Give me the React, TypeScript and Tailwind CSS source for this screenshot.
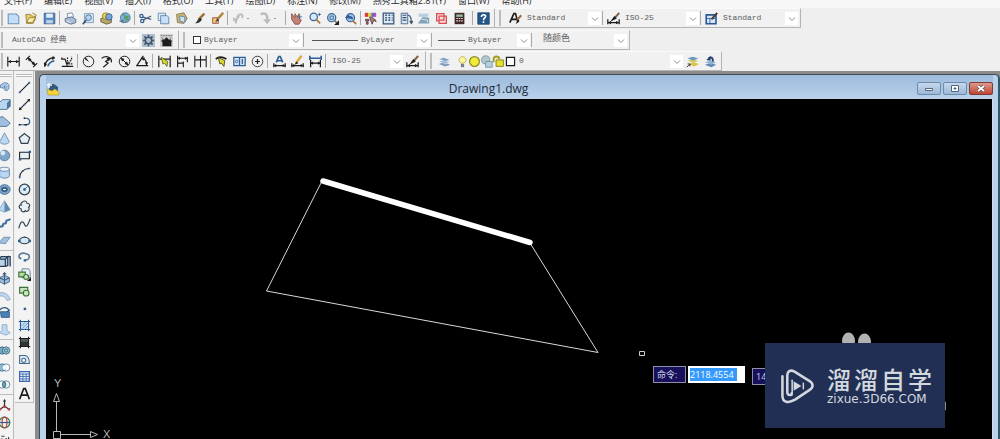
import React from "react";

const menus = [
  "文件(F)", "编辑(E)", "视图(V)", "插入(I)", "格式(O)", "工具(T)",
  "绘图(D)", "标注(N)", "修改(M)", "燕秀工具箱2.81(Y)", "窗口(W)", "帮助(H)",
];

const K = "#1c1c1c";
const B = "#2f5f96";
const L = "#b9d7f0";

const icons: Record<string, React.ReactNode> = {
  new: <path d="M1.500 2.500h10l3 3v9h-13z" fill="#c3def6" stroke="#6c93bb" strokeWidth="1.300" />,
  open: (
    <>
      <path d="M1 3h6l1 2h5v3l-3 6H2z" fill="#e8cf6c" stroke="#8f7a33" />
      <path d="M5 7h8l-4 6H2zM9 1l5 3-3 2" fill="#f7ecab" stroke="#8f7a33" />
    </>
  ),
  save: (
    <>
      <path d="M1.5 1.5h13v13h-13z" fill="#5c8cc7" stroke="#2e558c" />
      <path d="M4 2h8v5H4z" fill="#e3effa" />
      <path d="M4 10h8v4H4z" fill="#c3d4e6" />
    </>
  ),
  plot: (
    <>
      <path d="M4 2l6-1 2 5-7 2z" fill="#f5f8fc" stroke="#6b7f99" />
      <path d="M1.500 8l8-2 5 3v4l-6 2-7-3z" fill="#aabed6" stroke="#4c617d" />
      <path d="M3 11l5 2" stroke="#fff" />
    </>
  ),
  preview: (
    <>
      <path d="M3 2h11v11H3z" fill="#d9e8f5" stroke="#7491b0" />
      <circle cx="8" cy="7" r="3.500" fill="#b4d6f2" stroke="#3a618c" />
      <path d="M5 10l-4 5" stroke="#37526e" strokeWidth="2" />
    </>
  ),
  publish: (
    <>
      <path d="M1 8l8-2 5 3v4l-6 2-7-3z" fill="#b9a765" stroke="#5b5638" />
      <circle cx="7" cy="5" r="4" fill="#f0d24c" stroke="#8c7420" />
      <circle cx="11" cy="6" r="4" fill="#7aa6d6" stroke="#2e558c" />
    </>
  ),
  globe: (
    <>
      <circle cx="9" cy="7" r="6" fill="#7db4df" stroke="#416f9c" />
      <path d="M5 4c3-3 4 0 3 3s4 1 5-2M9 12c0-3 4-4 5-3" fill="#5da35c" stroke="#4d9450" />
      <path d="M1 11l6-2v5z" fill="#5c7693" />
    </>
  ),
  cut: (
    <>
      <path d="M15 5L5 10M15 9L4 6" stroke="#45607d" strokeWidth="1.500" />
      <circle cx="3" cy="5" r="2" fill="none" stroke="#315a91" strokeWidth="1.500" />
      <circle cx="4" cy="11" r="2" fill="none" stroke="#315a91" strokeWidth="1.500" />
    </>
  ),
  copy: (
    <>
      <path d="M1.500 1.500h9v9h-9z" fill="#e2effa" stroke="#587fa8" />
      <path d="M4.500 4.500h8l2 2v8h-10z" fill="#c7e0f5" stroke="#4d79a8" />
    </>
  ),
  paste: (
    <>
      <path d="M2 3l9-2 4 7-4 6-8-1z" fill="#c8b376" stroke="#7d6e40" />
      <path d="M6 5l6 1v7l-6-2z" fill="#cfe5f6" stroke="#557fa8" />
    </>
  ),
  match: (
    <>
      <path d="M14 2L7 9" stroke="#9e7233" strokeWidth="3" />
      <path d="M9 7l2 2c-2 5-6 5-9 5 3-1 3-5 7-7z" fill="#333" />
    </>
  ),
  block: (
    <>
      <path d="M2 7h7v7H2z" fill="#efc76c" stroke="#9b4544" />
      <path d="M15 1L7 10" stroke="#b0843c" strokeWidth="3" />
      <path d="M8 8l2 2-5 3z" fill="#493b62" />
    </>
  ),
  undo: (
    <>
      <path d="M6 6c5-6 9-2 6 1M5 14c-1-4 0-6 4-9" fill="none" stroke="#bcbcbc" strokeWidth="2.500" />
      <path d="M1 6l6 4-5 2z" fill="#bcbcbc" />
    </>
  ),
  redo: (
    <>
      <path d="M2 3c6-3 9 0 8 8" fill="none" stroke="#bcbcbc" strokeWidth="3" />
      <path d="M5 9h10l-5 6z" fill="#bcbcbc" />
    </>
  ),
  pan: (
    <>
      <path d="M2 2l4 5V2l3 4 2-4 1 7 2 1-3 5H6L2 9z" fill="#c38375" stroke="#84483f" />
      <path d="M12 3v6M9 6h6" stroke="#416b9c" />
    </>
  ),
  zoom: (
    <>
      <circle cx="7" cy="6" r="4.500" fill="#d5eafb" stroke="#3c6696" strokeWidth="1.500" />
      <path d="M10 9l5 5" stroke="#a8743a" strokeWidth="2" />
      <path d="M12 3h4M14 1v4" stroke={B} />
    </>
  ),
  zoomwin: (
    <>
      <circle cx="7" cy="7" r="5" fill="#b7d4ed" stroke="#3c6696" strokeWidth="1.500" />
      <path d="M5 5h4v4H5z" fill="none" stroke={B} />
      <path d="M11 11l2 2" stroke="#8a6a44" strokeWidth="2" />
      <path d="M16 10v6h-6z" fill={K} />
    </>
  ),
  zoomprev: (
    <>
      <circle cx="8" cy="7" r="5" fill="#9fc6e8" stroke="#3c6696" strokeWidth="1.500" />
      <path d="M1 7l5-5v3c4 0 5 1 5 4" fill="#315f96" />
      <path d="M11 11l4 4" stroke="#a8743a" strokeWidth="2" />
    </>
  ),
  props: (
    <>
      <path d="M1 1h4v5H1z" fill="#da3e39" />
      <path d="M5 1h4v5H5z" fill="#e8cc36" />
      <path d="M9 1h4v5H9z" fill="#4b70cd" />
      <path d="M12 1h3v5h-3z" fill="#b84ac4" />
      <path d="M2 9h4v2H2zM3 12h2v3H3zM7 6c5 1 7 3 8 6l-3-2-2 5-2-5z" fill="#bd786d" stroke="#4b3a43" />
    </>
  ),
  grid: (
    <>
      <path d="M1.500 1.500h13v13h-13z" fill="#dbe8f4" stroke="#375478" strokeWidth="1.500" />
      <path d="M4 4h2M8 4h2M12 4h1M4 7h2M8 7h2M12 7h1M4 10h2M8 10h2M12 10h1" stroke="#375478" strokeWidth="2" />
    </>
  ),
  palettes: (
    <>
      <path d="M1.500 1.500h8v13h-8z" fill="#dbe8f4" stroke="#375478" />
      <path d="M3 4h5M3 7h5M3 10h5" stroke="#375478" strokeWidth="1.500" />
      <path d="M10 4c4 0 4 5 4 9M12 11l2 3 2-3" fill="none" stroke="#375478" strokeWidth="1.500" />
    </>
  ),
  sheets: (
    <>
      <path d="M2 2h12v4H2z" fill="#b9cedf" />
      <path d="M1 14l6-8 8 1v7z" fill="#7fa2b9" />
      <path d="M6 9l7 1v3" fill="none" stroke="#e8f3fa" />
    </>
  ),
  markup: (
    <>
      <path d="M2 2h9v3h3v9H5v-3H2z" fill="#f6dada" stroke="#d54e52" strokeWidth="1.500" />
      <path d="M5 5h6v5H5z" fill="none" stroke="#d54e52" strokeWidth="1.500" />
    </>
  ),
  calc: (
    <>
      <path d="M2 1h12v14H2z" fill="#432626" />
      <path d="M4 3h8v3H4z" fill="#8fc0a0" />
      <path d="M4 8h2M7 8h2M10 8h2M4 11h2M7 11h2M10 11h2" stroke="#ddd" strokeWidth="1.500" />
    </>
  ),
  help: (
    <>
      <path d="M1 1h14v14H1z" fill="#24588c" stroke="#163e68" />
      <path d="M5.500 6c0-4 6-3 5 0-1 1.500-2.500 1.500-2.500 4M8 11.500v2" fill="none" stroke="#fff" strokeWidth="2" />
    </>
  ),
  textstyle: (
    <>
      <path d="M1 13L6 2h2l3 11M3 9h7" fill="none" stroke={K} strokeWidth="2" />
      <path d="M15 4l-5 6" stroke="#a06a3c" strokeWidth="2.500" />
      <path d="M11 9l2 2-5 4z" fill={K} />
    </>
  ),
  dimstyle: (
    <>
      <path d="M1 9v6M15 9v6M1 13h14" stroke={K} strokeWidth="1.500" />
      <path d="M1 13l4-2v4zM15 13l-4-2v4z" fill={K} />
      <path d="M15 1L9 8" stroke="#7d6248" strokeWidth="2.500" />
      <path d="M9 5l3 3-8 4z" fill={K} />
    </>
  ),
  tablestyle: (
    <>
      <path d="M1.500 3.500h12v11h-12z" fill="#d6e6f8" stroke="#2c5795" strokeWidth="2" />
      <path d="M2 8h11M6 8v6" stroke="#2c5795" />
      <path d="M15 1L8 9" stroke="#4a3e37" strokeWidth="2.500" />
    </>
  ),
  gear: (
    <>
      <path d="M0 0h16v16H0z" fill="#aebfd0" />
      <circle cx="8" cy="8" r="4" fill="none" stroke="#43566c" strokeWidth="2" />
      <path d="M8 1v3M8 12v3M1 8h3M12 8h3M3 3l2 2M11 11l2 2M13 3l-2 2M5 11l-2 2" stroke="#43566c" strokeWidth="2" />
    </>
  ),
  home: (
    <>
      <path d="M0 0h16v16H0z" fill="#cfcfcf" />
      <path d="M3 6l2 1 3-3 3 3 2-1v2h2l-1 2v5H3v-5L1 8h2z" fill={K} />
      <path d="M1 2h14M2 5h2M12 5h3" stroke="#666" strokeDasharray="2 1" />
    </>
  ),
  dlinear: (
    <>
      <path d="M1 2v12M15 2v12M2 8h12" stroke={K} strokeWidth="1.400" />
      <path d="M1 8l4-2v4zM15 8l-4-2v4z" fill={K} />
    </>
  ),
  daligned: (
    <>
      <path d="M1 6l5-5M10 15l5-5M4 4l8 8" stroke={K} strokeWidth="1.400" />
      <path d="M3 3l5 2-3 3zM13 13l-5-2 3-3z" fill={K} />
    </>
  ),
  darc: (
    <>
      <path d="M2 14C3 7 7 4 14 3" fill="none" stroke={K} strokeWidth="1.500" />
      <path d="M6 14c1-4 3-6 8-7" fill="none" stroke={B} strokeWidth="2" />
      <path d="M1 9l4 2-3 4zM12 1l3 3-4 2z" fill={K} />
    </>
  ),
  dordinate: (
    <>
      <path d="M1 3v2h4M1 14h14M5 5l3 9" fill="none" stroke={K} strokeWidth="1.500" />
      <path d="M8 3v8h6M9 10l4-4V2" fill="none" stroke={K} strokeDasharray="2 1" strokeWidth="1.500" />
    </>
  ),
  dradius: (
    <>
      <circle cx="8" cy="8" r="6.500" fill="none" stroke={K} strokeWidth="1.200" />
      <path d="M8 8L4 4" stroke={K} strokeWidth="1.200" />
      <path d="M3 3l4 2-2 2z" fill={K} />
    </>
  ),
  djog: (
    <>
      <path d="M2 4c6-4 13-1 12 5" fill="none" stroke={K} strokeWidth="1.500" />
      <path d="M12 4L7 8l3 2-6 5" fill="none" stroke={K} strokeWidth="1.500" />
      <path d="M13 3l-2 5-3-4z" fill={K} />
    </>
  ),
  ddiameter: (
    <>
      <circle cx="8" cy="8" r="6.500" fill="none" stroke={K} strokeWidth="1.200" />
      <path d="M4 4l8 8" stroke={K} strokeWidth="1.200" />
      <path d="M3 3l5 2-3 3zM13 13l-5-2 3-3z" fill={K} />
    </>
  ),
  dangle: (
    <>
      <path d="M9 1L1 13h14M8 4c4 1 5 4 5 8" fill="none" stroke={K} strokeWidth="1.500" />
      <path d="M6 3l5 0-2 4zM13 13l-2-4h4z" fill={K} />
    </>
  ),
  dquick: (
    <>
      <path d="M1 1v14M15 1v14M2 5h13" stroke={K} strokeWidth="1.500" />
      <path d="M4 3l8 5-1 6-3-4-2 1z" fill="#d9dc2e" stroke="#5d5d1a" />
    </>
  ),
  dbase: (
    <>
      <path d="M2 1v14M2 4h12M2 10h7M9 8v7M14 2v7" stroke={K} strokeWidth="1.400" />
      <path d="M2 4l3-2v4zM14 4l-3-2v4z" fill={K} />
    </>
  ),
  dcont: <path d="M1 1v14M8 1v14M15 1v14M1 6h14" stroke={K} strokeWidth="1.300" />,
  leader: (
    <>
      <path d="M1 5c4-4 8-3 13 0" fill="none" stroke={K} strokeWidth="2" />
      <path d="M4 3l8 4-1 7-3-4-2 1z" fill="#d9dc2e" stroke="#3b3b1a" />
    </>
  ),
  tol: (
    <>
      <path d="M1 3h14v10H1z" fill="#cfe3f6" stroke={B} strokeWidth="1.500" />
      <path d="M8 3v10M11.500 5v6" stroke={B} strokeWidth="1.500" />
      <circle cx="4.500" cy="8" r="1.500" fill="none" stroke={B} />
    </>
  ),
  center: (
    <>
      <circle cx="8" cy="8" r="6.500" fill="none" stroke={K} />
      <path d="M8 5v6M5 8h6" stroke={K} strokeWidth="1.500" />
    </>
  ),
  dimtext: (
    <>
      <path d="M4 9l3-7h2l3 7M5 7h6" fill="none" stroke={B} strokeWidth="2" />
      <path d="M1 10v5M15 10v5M1 13h14" stroke={K} strokeWidth="1.500" />
      <path d="M1 13l3-2v4zM15 13l-3-2v4z" fill={K} />
    </>
  ),
  dimedit: (
    <>
      <path d="M1 10v5M15 10v5M1 13h14" stroke={K} strokeWidth="1.500" />
      <path d="M1 13l3-2v4zM15 13l-3-2v4z" fill={K} />
      <path d="M13 1L6 10" stroke="#e0a63a" strokeWidth="3" />
      <path d="M7 8l2 2-5 2z" fill={K} />
    </>
  ),
  dimupd: (
    <>
      <path d="M2 6v9M14 6v9M2 10h12" stroke={K} strokeWidth="1.500" />
      <path d="M2 10l3-2v4zM14 10l-3-2v4z" fill={K} />
      <path d="M1 1v5M15 1v5M1 4h14" stroke={B} strokeWidth="2" />
    </>
  ),
  layers: (
    <>
      <path d="M1 11l6-2 8 3-6 2z" fill="#7c99b6" />
      <path d="M1 8l6-2 8 3-6 2z" fill="#9cb9d6" stroke="#fff" strokeWidth=".5" />
      <path d="M1 5l6-2 8 3-6 2z" fill="#7fa0c2" stroke="#fff" strokeWidth=".5" />
    </>
  ),
  bulb: (
    <>
      <path d="M6 10C1 6 5 2 8 2s7 4 2 8z" fill="#fbf6a0" stroke="#b5a53c" />
      <path d="M6 11h4v4H6z" fill="#7b8190" />
    </>
  ),
  sun: <circle cx="8" cy="8" r="6" fill="#f2ec38" stroke="#8a8a28" strokeWidth="1.500" />,
  freeze: (
    <>
      <circle cx="7" cy="6" r="5" fill="#b4c8ce" stroke="#73919e" />
      <path d="M7 8h8v7H7z" fill="#b6d1df" stroke="#6e8d9f" />
    </>
  ),
  lock: (
    <>
      <path d="M2 9V5c1-5 7-3 7 0" fill="none" stroke="#a5a02a" strokeWidth="2.500" />
      <path d="M5 6h9v8H5z" fill="#e8df2b" stroke="#77721d" />
    </>
  ),
  swatch: <path d="M3 3h10v10H3z" fill="#fff" stroke={K} strokeWidth="1.500" />,
  layercur: (
    <>
      <path d="M4 11l5-2 7 2-6 3z" fill="#d8c63a" />
      <path d="M2 7l6-2 7 2-6 3z" fill="#d6cf62" />
      <path d="M2 4l6-2 7 2-6 3z" fill="#6b99bf" />
      <path d="M1 15l4-4M5 11v3M5 11H2" stroke={K} />
    </>
  ),
  layerprev: (
    <>
      <path d="M1 12l7-2 7 2-6 3z" fill="#5f86b0" />
      <path d="M1 9l7-2 7 2-6 3z" fill="#8fb3d6" />
      <path d="M11 8c0-5-2-6-5-4" fill="none" stroke="#1f3f6e" strokeWidth="2.500" />
      <path d="M3 6l5-5v6z" fill="#1f3f6e" />
    </>
  ),
  line: (
    <>
      <path d="M2 14L14 2" stroke={K} strokeWidth="1.300" />
      <path d="M1 13h2v2H1zM13 1h2v2h-2z" fill={B} />
    </>
  ),
  xline: (
    <>
      <path d="M2 14L14 2" stroke={K} strokeWidth="1.300" />
      <path d="M1 15l1-4 3 3zM15 1l-4 1 3 3z" fill={K} />
      <path d="M7 7h2v2H7z" fill={B} />
    </>
  ),
  pline: (
    <>
      <path d="M1 12h10c5-1 4-7 0-8H8" fill="none" stroke={B} strokeWidth="1.500" />
      <path d="M1 11h2v2H1zM8 11h3v2H8zM7 3h2v2H7z" fill={K} />
    </>
  ),
  polygon: <path d="M8 2l6.500 5-2.500 7H4L1.500 7z" fill="#e2eef3" stroke="#33424c" strokeWidth="1.500" />,
  rect: (
    <>
      <path d="M2 4h12v8H2z" fill="#e5eff7" stroke={K} strokeWidth="1.300" />
      <path d="M1 11h3v3H1zM13 2h3v3h-3z" fill={B} />
    </>
  ),
  arc: (
    <>
      <path d="M2 14C2 8 7 3 14 3" fill="none" stroke={K} strokeWidth="1.300" />
      <path d="M1 13h2v2H1zM5 5h2v2H5zM13 2h2v2h-2z" fill={B} />
    </>
  ),
  circle: (
    <>
      <circle cx="8" cy="8" r="6.500" fill="#dcecf5" stroke="#33424c" strokeWidth="1.500" />
      <path d="M8 8l4-4M7 7h2v2H7z" stroke={B} fill={B} />
    </>
  ),
  cloud: <path d="M5 3c2-3 6-2 6 1 4 0 4 4 2 5 2 4-2 6-4 4-2 3-6 1-5-2-4-1-3-5 0-5-1-1 0-3 1-3z" fill="#eaf1f6" stroke="#33424c" strokeWidth="1.400" />,
  spline: <path d="M1 14C3 5 6 4 8 9s4 2 7-7" fill="none" stroke="#33424c" strokeWidth="1.400" />,
  ellipse: (
    <>
      <ellipse cx="8" cy="8" rx="6" ry="4" fill="#d5e7f4" stroke="#33424c" strokeWidth="1.500" />
      <path d="M0 7h3v3H0zM13 7h3v3h-3zM7 3h2v2H7z" fill={B} />
    </>
  ),
  earc: (
    <>
      <path d="M2 9C-1 3 6 2 9 3c7 1 6 8 0 8" fill="none" stroke="#5c7c99" strokeWidth="2" />
      <path d="M7 10h3v3H7zM2 8h2v2H2z" fill={B} />
    </>
  ),
  insert: (
    <>
      <path d="M5 1h8l2 3v8H5z" fill="#e4eef5" stroke="#55718b" />
      <path d="M1 5h8v6H1z" fill="#b9dca7" stroke="#3b7138" strokeWidth="1.400" />
      <circle cx="10" cy="11" r="3" fill="#cbe8bb" stroke="#3b7138" strokeWidth="1.400" />
      <path d="M16 11v5h-5z" fill={K} />
    </>
  ),
  makeblock: (
    <>
      <path d="M2 3h10v7H2z" fill="#c8e2bd" stroke="#3b7138" strokeWidth="1.400" />
      <circle cx="10" cy="10" r="3.500" fill="#cbe8bb" stroke="#3b7138" strokeWidth="1.400" />
    </>
  ),
  point: <path d="M7 7h3v3H7z" fill={B} />,
  hatch: (
    <>
      <path d="M3 3h10v10H3z" fill="#c8dcf0" />
      <path d="M3 1v14M13 1v14M1 3h14M1 13h14" stroke="#28578d" strokeWidth="1.300" />
      <path d="M4 9l5-5M4 13l9-9M8 13l5-5" stroke="#5a8fc9" />
    </>
  ),
  gradient: (
    <>
      <path d="M3 3h10v10H3z" fill="#53605f" />
      <path d="M3 7h10v6H3z" fill="#2d3535" />
      <path d="M3 1v14M13 1v14M1 3h14M1 13h14" stroke={K} strokeWidth="1.300" />
    </>
  ),
  region: (
    <>
      <path d="M2 3h7c4 1 5 5 5 10H2z" fill="#dcebf7" stroke="#466789" strokeWidth="1.300" />
      <circle cx="7" cy="9" r="2.500" fill="#fff" stroke="#466789" strokeWidth="1.300" />
    </>
  ),
  table: (
    <>
      <path d="M2 2h12v12H2z" fill="#e4edfb" stroke="#3c68b1" strokeWidth="1.500" />
      <path d="M2 5h12M2 8h12M2 11h12M6 4v10M10 4v10" stroke="#3c68b1" />
    </>
  ),
  mtext: <path d="M2 15L7 2h2l5 13M4 10h8" fill="none" stroke={K} strokeWidth="2" />,
  polysolid: <path d="M3 5l5-3c8 0 6 8 3 10l-3-1c3-3 2-6 0-5v3L3 8z" fill="#a9cced" stroke="#55799e" />,
  box: (
    <>
      <path d="M1 6l5-4h9v8l-4 4H1z" fill={L} stroke="#3e658c" />
      <path d="M11 14V6l4-4v8z" fill="#4f779f" />
    </>
  ),
  wedge: <path d="M1 3l5-1 9 8-4 4H1z" fill="#9fbfdd" stroke="#3e658c" />,
  cone: <path d="M8 1l6 11c-2 4-10 4-12 0z" fill={L} stroke="#6a87a6" />,
  sphere: (
    <>
      <circle cx="8" cy="8" r="6.500" fill="#7fa5c9" stroke="#55799e" />
      <circle cx="6" cy="5" r="3" fill="#d6e8f7" />
    </>
  ),
  cylinder: (
    <>
      <path d="M2 4v8c1 4 11 4 12 0V4z" fill={L} stroke="#55799e" />
      <ellipse cx="8" cy="4" rx="6" ry="2.500" fill="#e8f2fa" stroke="#55799e" />
    </>
  ),
  torus: (
    <>
      <ellipse cx="8" cy="8" rx="7" ry="6" fill="#7ba2c8" stroke="#416b93" />
      <ellipse cx="8" cy="8" rx="3" ry="2" fill="#fff" stroke="#315a82" strokeWidth="2" />
    </>
  ),
  pyramid: (
    <>
      <path d="M8 1l7 11-7 3-7-3z" fill={L} stroke="#7f9fbd" />
      <path d="M8 1l7 11-7 3z" fill="#5f87ae" />
    </>
  ),
  helix: <path d="M1 14c1-5 5 0 5-4s4 0 4-4 3 0 5-4" fill="none" stroke="#426e9e" strokeWidth="2.500" />,
  planar: <path d="M1 11l6-7h8l-6 8z" fill="#9fc0e1" stroke="#6488ad" />,
  extrude: <path d="M1 5h8v9H1zM9 5l3-3v11l-3 1M1 5l3-3h11v12" fill="#bcd3e6" stroke="#263c53" strokeWidth="1.500" />,
  presspull: (
    <>
      <path d="M2 7l6-3 6 3v5l-6 3-6-3z" fill="#9ebfdd" stroke="#3a5876" />
      <path d="M8 1v8M2 7l6 3 6-3M8 10v5M6 3l2-2 2 2" fill="none" stroke="#3a5876" strokeWidth="1.300" />
    </>
  ),
  sweep: <path d="M1 5c8-2 12 2 14 8l-4 1C9 9 6 8 1 9z" fill={L} stroke="#90a5bb" />,
  revolve: (
    <>
      <path d="M3 7h11v7H4z" fill="#4c81b8" stroke="#2c5783" />
      <path d="M2 5c4-5 9-3 12 0l-3 2" fill="none" stroke="#2c5783" strokeWidth="1.500" />
    </>
  ),
  loft: <path d="M5 2h6v7l4 3-5 3-8-3 3-3z" fill="#bcd9f1" stroke="#8aa8c5" />,
  union: (
    <>
      <circle cx="5" cy="8" r="4.500" fill="#72a8bd" stroke="#2f6079" />
      <circle cx="10" cy="8" r="4.500" fill="#9ac5d5" stroke="#2f6079" />
      <circle cx="10" cy="8" r="2" fill="none" stroke="#2f6079" />
    </>
  ),
  subtract: (
    <>
      <circle cx="10" cy="8" r="4.500" fill="#fff" stroke="#55799e" />
      <circle cx="5" cy="8" r="4.500" fill="#8fb7d3" stroke="#3a6281" />
      <ellipse cx="8" cy="8" rx="2" ry="3" fill="#fff" />
    </>
  ),
  intersect: (
    <>
      <circle cx="5" cy="8" r="4.500" fill="#fff" stroke="#4b7895" />
      <circle cx="10" cy="8" r="4.500" fill="none" stroke="#4b7895" />
      <ellipse cx="7.500" cy="8" rx="2" ry="3" fill="#6fa7c8" stroke="#2f6079" />
    </>
  ),
  move3d: (
    <>
      <path d="M8 9V2M8 9l-6 4M8 9l6 4" stroke="#2f2f2f" strokeWidth="1.500" />
      <path d="M6 3l2-3 2 3z" fill="#2f2f2f" />
      <path d="M6 8h4v3H6zM1 11h3v3H1zM12 11h3v3h-3z" fill="#b64848" />
    </>
  ),
  rotate3d: (
    <>
      <circle cx="8" cy="8" r="6.500" fill="none" stroke="#3b8549" strokeWidth="1.500" />
      <ellipse cx="8" cy="8" rx="3" ry="6.500" fill="none" stroke="#b64848" strokeWidth="1.500" />
      <path d="M1 8h14" stroke="#38568c" strokeWidth="1.500" />
    </>
  ),
  align3d: <path d="M1 13c1-7 6-7 7-1M10 6v8M13 5v9M4 4h4" fill="none" stroke="#454545" strokeWidth="1.500" />,
};

function Glyph({ name }: { name: string }) {
  return (
    <svg viewBox="0 0 16 16" className="h-[13px] w-[13px] shrink-0" aria-hidden="true">
      {icons[name]}
    </svg>
  );
}

function Tool({ name }: { name: string }) {
  return (
    <button type="button" aria-label={name} className="flex h-[17px] w-[18px] items-center justify-center">
      <Glyph name={name} />
    </button>
  );
}

function Tools({ names }: { names: string[] }) {
  return (
    <div className="flex items-center">
      {names.map((n) => (
        <Tool key={n} name={n} />
      ))}
    </div>
  );
}

function Sep() {
  return <div className="mx-px h-[14px] w-px shrink-0 bg-[#a9a9a9]" />;
}

function Grip() {
  return <div className="mx-px h-[16px] w-[2px] shrink-0 border-x border-x-[#bcbcbc] bg-white" />;
}

function Chevron() {
  return (
    <svg viewBox="0 0 13 13" className="pointer-events-none h-[13px] w-[13px] shrink-0 bg-white" aria-hidden="true">
      <path d="M4 5.500l3 3 3-3" fill="none" stroke="#8c8c8c" />
    </svg>
  );
}

function Combo({ label, value, width, children, size = "text-[8px]" }: {
  label: string; value: string; width: string; children?: React.ReactNode; size?: string;
}) {
  return (
    <div className={`flex h-[15px] items-center bg-[#f1f1f1] ${width}`}>
      {children}
      <select
        aria-label={label}
        className={`min-w-0 flex-1 appearance-none bg-transparent pl-[3px] font-['Liberation_Mono','Noto_Sans_CJK_SC',monospace] text-[#5c5c5c] outline-none ${size}`}
      >
        <option>{value}</option>
      </select>
      <Chevron />
    </div>
  );
}

function Bar({ children }: { children: React.ReactNode }) {
  return (
    <div className="flex h-[20px] items-center border-r border-b border-t border-t-[#fafafa] border-r-[#b4b4b4] border-b-[#b4b4b4] bg-[#f1f1f1]">
      {children}
    </div>
  );
}

function Palette({ groups, width }: { groups: string[][]; width: string }) {
  return (
    <div className={`shrink-0 overflow-hidden border-r border-b border-[#bdbdbd] bg-[#f3f3f3] ${width}`}>
      <div className="mx-px mt-[3px] mb-[2px] h-[3px] border-y border-[#bcbcbc] bg-white" />
      {groups.map((g, i) => (
        <div key={i} className={i > 0 ? "mt-px border-t border-[#bdbdbd] pt-[2px]" : ""}>
          {g.map((n) => (
            <button key={n} type="button" aria-label={n} className="flex h-[17px] w-full items-center justify-center">
              <Glyph name={n} />
            </button>
          ))}
        </div>
      ))}
    </div>
  );
}

function WindowButton({ label, tone, children }: { label: string; tone: string; children: React.ReactNode }) {
  return (
    <button type="button" aria-label={label} className={`flex h-[13px] w-[24px] items-center justify-center rounded-[2px] border ${tone}`}>
      <svg viewBox="0 0 12 9" className="h-[9px] w-[12px]" aria-hidden="true">{children}</svg>
    </button>
  );
}

function Drawing() {
  return (
    <svg className="absolute inset-0 h-full w-full" aria-hidden="true">
      <path d="M276 82L220.500 192L552 253.500L484 144" fill="none" stroke="#d8d8d8" strokeWidth="1" />
      <path d="M277 82L484 143.500" stroke="#fff" strokeWidth="5.500" strokeLinecap="round" />
      <path d="M593.500 252.500h5v4h-5z" fill="none" stroke="#d0d0d0" />
      <g fill="none" stroke="#b8b8b8">
        <path d="M7.500 332.500h7v7h-7z" />
        <path d="M10.500 332V303M7.500 302.500L10.500 294.500L13.500 302.500z" />
        <path d="M15 335.500H44M44.500 332.500L51.500 335.500L44.500 338.500z" />
      </g>
      <g fill="#b8b8b8" fontFamily="'Liberation Sans', sans-serif" fontSize="11">
        <text x="8" y="288">Y</text>
        <text x="57" y="339">X</text>
      </g>
      <ellipse cx="802.500" cy="242" rx="6.500" ry="8.500" fill="#b2b2b2" />
      <ellipse cx="818.500" cy="243" rx="6.500" ry="8.500" fill="#b2b2b2" />
      <path d="M896 303h3.500v8H896" fill="none" stroke="#8c8c8c" />
    </svg>
  );
}

function Watermark() {
  return (
    <div className="absolute top-[244px] left-[719px] flex h-[85px] w-[180px] items-center gap-[12px] bg-[#212f54] pl-[15px] text-[#d3d8df]">
      <svg viewBox="0 0 36 36" className="h-[36px] w-[35px] shrink-0" aria-hidden="true">
        <g fill="none" stroke="currentColor" strokeWidth="2.600" strokeLinejoin="round" strokeLinecap="round">
          <path d="M12 25.500V27c-4 1-4.500-1-4.500-3V7c0-4 3-6 7-4l16 10c4 2.500 4 6.500 0 9l-15 10c-7 4-13 3-13-4V8" />
          <path d="M12.500 12v13" strokeWidth="1.600" />
        </g>
        <path d="M14 13l8 5-8 5z" fill="currentColor" />
        <path d="M24 14.500v7" stroke="currentColor" strokeWidth="1.500" />
      </svg>
      <div>
        <div className="flex gap-[3px] font-['Noto_Sans_CJK_SC',sans-serif] text-[24px] leading-[26px] font-medium">
          <span>溜</span><span>溜</span><span>自</span><span>学</span>
        </div>
        <div className="font-['DejaVu_Sans',sans-serif] text-[12px] leading-[14px]">zixue.3D66.COM</div>
      </div>
    </div>
  );
}

export default function App() {
  return (
    <div className="flex h-screen flex-col overflow-hidden bg-[#efefef]">
      <nav className="flex h-[8px] shrink-0 items-end gap-[12px] overflow-hidden bg-[#f7f7f7] pb-[2px] pl-[4px] font-['Open_Sans','Noto_Sans_CJK_SC',sans-serif] text-[9px] leading-[10px] text-[#2b2b2b]">
        {menus.map((m) => (
          <a key={m} href="#" className="whitespace-nowrap">{m}</a>
        ))}
      </nav>

      <div className="flex shrink-0 flex-col gap-px">
        <div className="flex">
          <Bar>
            <Grip />
            <Tools names={["new", "open", "save"]} />
            <Sep />
            <Tools names={["plot", "preview", "publish", "globe"]} />
            <Sep />
            <Tools names={["cut", "copy", "paste", "match", "block"]} />
            <Sep />
            <Tool name="undo" />
            <span className="h-px w-[2px] bg-[#999]" />
            <span className="w-[7px]" />
            <Tool name="redo" />
            <span className="h-px w-[2px] bg-[#999]" />
            <span className="w-[8px]" />
            <Sep />
            <Tools names={["pan", "zoom", "zoomwin", "zoomprev"]} />
            <Sep />
            <div className="flex w-[106px]">
              {["props", "grid", "palettes", "sheets", "markup", "calc"].map((n) => (
                <button key={n} type="button" aria-label={n} className="flex h-[17px] min-w-0 flex-1 items-center justify-center">
                  <Glyph name={n} />
                </button>
              ))}
            </div>
            <span className="w-[3px]" />
            <Sep />
            <Tool name="help" />
            <span className="w-[2px]" />
          </Bar>
          <Bar>
            <span className="w-[3px]" />
            <Grip />
            <span className="w-[4px]" />
            <Tool name="textstyle" />
            <Combo label="文字样式" value="Standard" width="w-[77px]" />
            <Sep />
            <Tool name="dimstyle" />
            <Combo label="标注样式" value="ISO-25" width="w-[77px]" />
            <Sep />
            <Tool name="tablestyle" />
            <Combo label="表格样式" value="Standard" width="w-[78px]" />
            <span className="w-[2px]" />
          </Bar>
        </div>
        <div className="flex pt-px">
          <Bar>
            <Grip />
            <span className="w-[5px]" />
            <Combo label="工作空间" value="AutoCAD 经典" width="w-[130px]" />
            <Tools names={["gear", "home"]} />
            <span className="w-[3px]" />
          </Bar>
          <Bar>
            <span className="w-[3px]" />
            <Grip />
            <span className="w-[4px]" />
            <Combo label="颜色" value="ByLayer" width="w-[112px]">
              <span className="ml-[3px] size-[8px] border border-[#333] bg-white" />
            </Combo>
            <Sep />
            <Combo label="线型" value="ByLayer" width="w-[125px]">
              <span className="ml-[7px] h-px w-[46px] bg-[#555]" />
            </Combo>
            <Sep />
            <Combo label="线宽" value="ByLayer" width="w-[97px]">
              <span className="ml-[5px] h-px w-[27px] bg-[#555]" />
            </Combo>
            <Sep />
            <span className="w-[7px]" />
            <Combo label="打印样式" value="随颜色" width="w-[87px]" size="text-[9px]" />
            <span className="w-[2px]" />
          </Bar>
        </div>
        <div className="flex">
          <Bar>
            <Grip />
            <Tools names={["dlinear", "daligned", "darc", "dordinate"]} />
            <Sep />
            <Tools names={["dradius", "djog", "ddiameter", "dangle"]} />
            <Sep />
            <span className="w-px" />
            <Tools names={["dquick", "dbase", "dcont"]} />
            <Sep />
            <Tools names={["leader", "tol", "center"]} />
            <Sep />
            <span className="w-px" />
            <Tools names={["dimtext", "dimedit", "dimupd"]} />
            <Sep />
            <span className="w-[2px]" />
            <Combo label="当前标注样式" value="ISO-25" width="w-[74px]" />
            <Tool name="dimstyle" />
            <span className="w-[4px]" />
          </Bar>
          <Bar>
            <span className="w-[3px]" />
            <Grip />
            <span className="w-[2px]" />
            <Tool name="layers" />
            <Combo label="图层" value="0" width="w-[230px]">
              <span className="ml-[3px] flex">
                {["bulb", "sun", "freeze", "lock", "swatch"].map((n) => (
                  <span key={n} className="flex w-[12px] justify-center"><Glyph name={n} /></span>
                ))}
              </span>
            </Combo>
            <Tools names={["layercur", "layerprev"]} />
            <span className="w-[2px]" />
          </Bar>
        </div>
      </div>

      <div className="flex min-h-0 flex-1">
        <div className="-ml-[4px] flex w-[39px] shrink-0 items-start gap-px bg-[#efefef]">
          <Palette
            width="w-[18px]"
            groups={[
              ["polysolid", "box", "wedge", "cone", "sphere", "cylinder", "torus", "pyramid", "helix", "planar"],
              ["extrude", "presspull", "sweep", "revolve", "loft"],
              ["union", "subtract", "intersect"],
              ["move3d", "rotate3d", "align3d"],
            ]}
          />
          <Palette
            width="w-[19px]"
            groups={[[
              "line", "xline", "pline", "polygon", "rect", "arc", "circle", "cloud", "spline", "ellipse",
              "earc", "insert", "makeblock", "point", "hatch", "gradient", "region", "table", "mtext",
            ]]}
          />
        </div>

        <div className="flex min-w-0 flex-1 bg-[#8b8b8b] pt-[3px] pl-[4px]">
          <section className="flex min-w-0 flex-1 flex-col rounded-t-[5px] border-t border-r-2 border-l border-t-[#3f4a55] border-r-[#2f5868] border-l-[#3f4a55] bg-[#b9d1ea] pr-[5px] pl-[6px]">
            <header className="flex h-[24px] shrink-0 items-center bg-linear-to-b from-[#9dbbdc] to-[#b9d1ea] pt-[3px]">
              <svg viewBox="0 0 14 14" className="h-[14px] w-[14px]" aria-hidden="true">
                <path d="M3 2h5l4 3v5H3z" fill="#35597c" />
                <path d="M1 3h5M3 1v5" stroke="#f3f8fb" strokeWidth="1.500" />
                <path d="M1 7l5 2 3-2 4 3v3H2z" fill="#f3d53a" stroke="#b6952a" strokeWidth=".6" />
              </svg>
              <h1 className="flex-1 text-center font-['Open_Sans',sans-serif] text-[12px] leading-[16px] text-[#1d2b3b]">Drawing1.dwg</h1>
              <div className="flex gap-[2px]">
                <WindowButton label="最小化" tone="border-[#6f8bab] bg-linear-to-b from-[#c6d9ee] to-[#9bb8d8]">
                  <path d="M2.500 4.500h7v2h-7z" fill="#fff" stroke="#54667b" />
                </WindowButton>
                <WindowButton label="还原" tone="border-[#6f8bab] bg-linear-to-b from-[#c6d9ee] to-[#9bb8d8]">
                  <path d="M2.500 1.500h7v6h-7z" fill="#fff" stroke="#54667b" />
                  <path d="M5 4h2v1H5z" fill="#54667b" stroke="#54667b" />
                </WindowButton>
                <WindowButton label="关闭" tone="border-[#843a34] bg-linear-to-b from-[#dd9a8d] to-[#bd4331]">
                  <path d="M3 2l6 5M9 2L3 7" stroke="#5d4545" strokeWidth="3.500" />
                  <path d="M3 2l6 5M9 2L3 7" stroke="#fff" strokeWidth="2" />
                </WindowButton>
              </div>
            </header>
            <main className="relative min-h-0 flex-1 overflow-hidden border-r border-[#d8dde2] bg-black">
              <Drawing />
              <div className="absolute top-[267px] left-[607px] flex items-start gap-[2px] font-['Open_Sans','Noto_Sans_CJK_SC',sans-serif]">
                <label htmlFor="distance" className="flex h-[17px] w-[33px] items-center border border-[#8d8da5] bg-[#17115c] pl-[3px] text-[9px] text-[#d5d5e4]">命令:</label>
                <div className="flex h-[17px] w-[57px] items-center bg-white pl-[2px]">
                  <input id="distance" defaultValue="2118.4554" className="h-[13px] w-[47px] bg-[#3399ff] p-0 text-[9px] text-white outline-none" />
                </div>
                <output className="mt-[2px] ml-[5px] flex h-[17px] w-[33px] items-center border border-[#8d8da5] bg-[#17115c] pl-[3px] text-[9px] text-[#d5d5e4]">14</output>
              </div>
              <Watermark />
            </main>
          </section>
        </div>
      </div>
    </div>
  );
}
